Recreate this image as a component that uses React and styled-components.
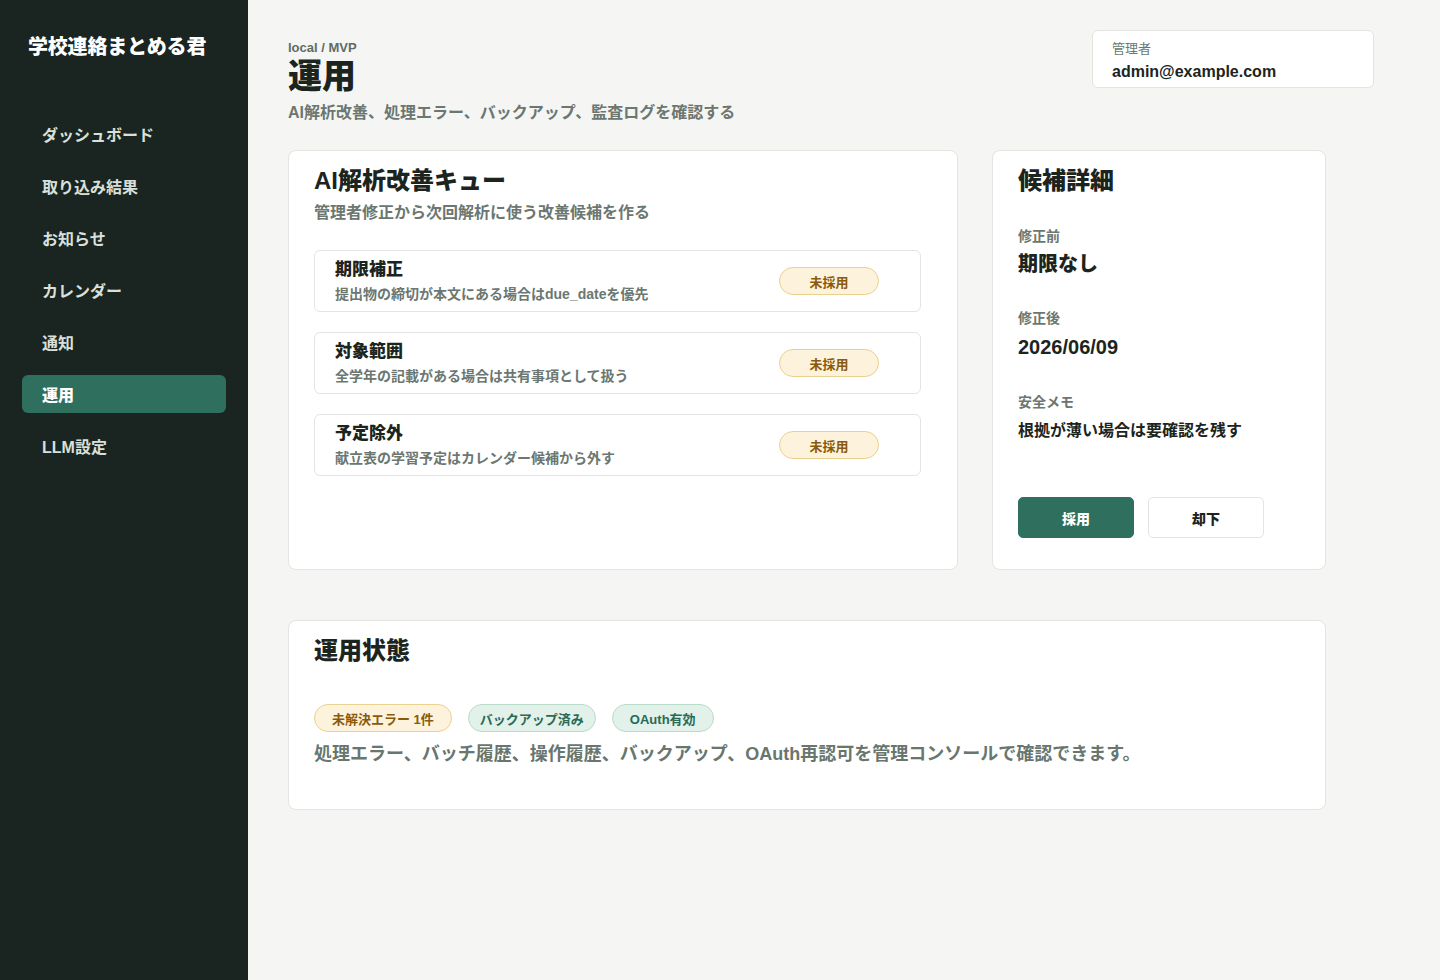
import styled, { createGlobalStyle } from "styled-components";

const GlobalStyle = createGlobalStyle`
  html, body {
    margin: 0;
    padding: 0;
    background: #f5f5f3;
  }
  body {
    font-family: "Liberation Sans", "Noto Sans CJK JP", sans-serif;
    color: #1c2420;
  }
  * {
    box-sizing: border-box;
  }
`;

const navItems = ["ダッシュボード", "取り込み結果", "お知らせ", "カレンダー", "通知", "運用", "LLM設定"];

const queue = [
  { title: "期限補正", desc: "提出物の締切が本文にある場合はdue_dateを優先" },
  { title: "対象範囲", desc: "全学年の記載がある場合は共有事項として扱う" },
  { title: "予定除外", desc: "献立表の学習予定はカレンダー候補から外す" },
];

const App = () => (
  <>
    <GlobalStyle />
    <Layout>
      <Sidebar>
        <Brand>学校連絡まとめる君</Brand>
        <Nav>
          {navItems.map((item) => (
            <NavItem key={item} $active={item === "運用"}>
              {item}
            </NavItem>
          ))}
        </Nav>
      </Sidebar>

      <Main>
        <Header>
          <div>
            <Crumb>local / MVP</Crumb>
            <PageTitle>運用</PageTitle>
            <PageLead>AI解析改善、処理エラー、バックアップ、監査ログを確認する</PageLead>
          </div>
          <UserBox>
            <UserLabel>管理者</UserLabel>
            <UserEmail>admin@example.com</UserEmail>
          </UserBox>
        </Header>

        <TopGrid>
          <Card $pad="14px 36px 26px 25px">
            <CardTitle>AI解析改善キュー</CardTitle>
            <CardLead>管理者修正から次回解析に使う改善候補を作る</CardLead>
            <QueueList>
              {queue.map((q) => (
                <QueueItem key={q.title}>
                  <div>
                    <ItemTitle>{q.title}</ItemTitle>
                    <ItemDesc>{q.desc}</ItemDesc>
                  </div>
                  <Pill $tone="warn" $w="100px">未採用</Pill>
                </QueueItem>
              ))}
            </QueueList>
          </Card>

          <Card $pad="14px 25px 26px 25px">
            <CardTitle>候補詳細</CardTitle>
            <Field $top="30px">
              <FieldLabel>修正前</FieldLabel>
              <ValueStrong>期限なし</ValueStrong>
            </Field>
            <Field $top="32px">
              <FieldLabel>修正後</FieldLabel>
              <ValueDate>2026/06/09</ValueDate>
            </Field>
            <Field $top="33px">
              <FieldLabel>安全メモ</FieldLabel>
              <ValueText>根拠が薄い場合は要確認を残す</ValueText>
            </Field>
            <Actions>
              <Button $primary>採用</Button>
              <Button>却下</Button>
            </Actions>
          </Card>
        </TopGrid>

        <StatusCard $pad="14px 25px 26px 25px">
          <CardTitle>運用状態</CardTitle>
          <Pills>
            <Pill $tone="warn">未解決エラー 1件</Pill>
            <Pill $tone="ok" $px="11px">バックアップ済み</Pill>
            <Pill $tone="ok">OAuth有効</Pill>
          </Pills>
          <StatusText>
            処理エラー、バッチ履歴、操作履歴、バックアップ、OAuth再認可を管理コンソールで確認できます。
          </StatusText>
        </StatusCard>
      </Main>
    </Layout>
  </>
);

export default App;

const Layout = styled.div`
  display: grid;
  grid-template-columns: 248px 1fr;
  min-height: 980px;
`;

const Sidebar = styled.aside`
  background: #1a2420;
  padding: 34px 22px;
`;

const Brand = styled.div`
  color: #ffffff;
  font-size: 20px;
  font-weight: 900;
  line-height: 26px;
  padding-left: 6px;
  letter-spacing: -0.2px;
`;

const Nav = styled.nav`
  display: flex;
  flex-direction: column;
  gap: 14px;
  margin-top: 55px;
`;

const NavItem = styled.div`
  height: 38px;
  display: flex;
  align-items: center;
  padding-left: 20px;
  border-radius: 6px;
  font-size: 16px;
  font-weight: ${(p) => (p.$active ? 900 : 600)};
  color: ${(p) => (p.$active ? "#ffffff" : "#d9e0db")};
  background: ${(p) => (p.$active ? "#2e6f5d" : "transparent")};
`;

const Main = styled.main`
  padding: 30px 66px 40px 40px;
`;

const Header = styled.header`
  display: flex;
  justify-content: space-between;
  align-items: flex-start;
`;

const Crumb = styled.div`
  font-size: 13px;
  font-weight: 700;
  color: #5f6c65;
  margin-top: 10px;
  line-height: 16px;
`;

const PageTitle = styled.h1`
  margin: 0;
  font-size: 34px;
  font-weight: 900;
  line-height: 40px;
  color: #1c2420;
`;

const PageLead = styled.p`
  margin: 6px 0 0;
  font-size: 16px;
  font-weight: 700;
  color: #6b7770;
  line-height: 22px;
`;

const UserBox = styled.div`
  width: 282px;
  height: 58px;
  background: #ffffff;
  border: 1px solid #e3e3df;
  border-radius: 6px;
  padding: 9px 19px;
`;

const UserLabel = styled.div`
  font-size: 13px;
  color: #6b7770;
  line-height: 17px;
`;

const UserEmail = styled.div`
  margin-top: 5px;
  font-size: 16px;
  font-weight: 700;
  color: #1c2420;
  line-height: 20px;
`;

const TopGrid = styled.div`
  display: grid;
  grid-template-columns: 670px 334px;
  gap: 34px;
  margin-top: 26px;
`;

const Card = styled.section`
  background: #ffffff;
  border: 1px solid #e4e4e0;
  border-radius: 8px;
  padding: ${(p) => p.$pad};
  height: 420px;
`;

const StatusCard = styled(Card)`
  width: 1038px;
  height: 190px;
  margin-top: 50px;
`;

const CardTitle = styled.h2`
  margin: 0;
  font-size: 24px;
  font-weight: 900;
  line-height: 32px;
  color: #1c2420;
`;

const CardLead = styled.p`
  margin: 5px 0 0;
  font-size: 16px;
  font-weight: 600;
  color: #6b7770;
  line-height: 22px;
`;

const QueueList = styled.div`
  display: flex;
  flex-direction: column;
  gap: 20px;
  margin-top: 26px;
`;

const QueueItem = styled.div`
  height: 62px;
  border: 1px solid #e4e4e0;
  border-radius: 6px;
  padding: 0 41px 0 20px;
  display: flex;
  align-items: center;
  justify-content: space-between;
`;

const ItemTitle = styled.div`
  font-size: 17px;
  font-weight: 900;
  line-height: 22px;
  color: #1c2420;
`;

const ItemDesc = styled.div`
  margin-top: 4px;
  font-size: 14px;
  font-weight: 600;
  color: #6b7770;
  line-height: 18px;
`;

const Pill = styled.span`
  display: inline-flex;
  align-items: center;
  justify-content: center;
  height: 28px;
  min-width: ${(p) => p.$w || "auto"};
  padding: 0 ${(p) => p.$px || "17px"};
  border-radius: 14px;
  font-size: 13px;
  font-weight: 700;
  background: ${(p) => (p.$tone === "warn" ? "#fdf3dc" : "#e2f1ea")};
  border: 1px solid ${(p) => (p.$tone === "warn" ? "#ebd18e" : "#b9dccb")};
  color: ${(p) => (p.$tone === "warn" ? "#8a5a0c" : "#2a6a55")};
`;

const Field = styled.div`
  margin-top: ${(p) => p.$top};
`;

const FieldLabel = styled.div`
  font-size: 14px;
  font-weight: 600;
  color: #6b7770;
  line-height: 18px;
`;

const ValueStrong = styled.div`
  margin-top: 6px;
  font-size: 20px;
  font-weight: 900;
  line-height: 26px;
  color: #1c2420;
`;

const ValueDate = styled.div`
  margin-top: 7px;
  font-size: 20px;
  font-weight: 700;
  line-height: 26px;
  color: #1c2420;
`;

const ValueText = styled.div`
  margin-top: 9px;
  font-size: 16px;
  font-weight: 700;
  line-height: 22px;
  color: #1c2420;
`;

const Actions = styled.div`
  display: flex;
  gap: 14px;
  margin-top: 55px;
`;

const Button = styled.button`
  width: 116px;
  height: 41px;
  border-radius: 5px;
  font-family: inherit;
  font-size: 14px;
  font-weight: 900;
  cursor: pointer;
  background: ${(p) => (p.$primary ? "#2e6f5d" : "#ffffff")};
  color: ${(p) => (p.$primary ? "#ffffff" : "#1c2420")};
  border: 1px solid ${(p) => (p.$primary ? "#2e6f5d" : "#e4e4e0")};
`;

const Pills = styled.div`
  display: flex;
  gap: 16px;
  margin-top: 37px;
`;

const StatusText = styled.p`
  margin: 10px 0 0;
  font-size: 18px;
  font-weight: 700;
  color: #68766e;
  line-height: 24px;
`;
